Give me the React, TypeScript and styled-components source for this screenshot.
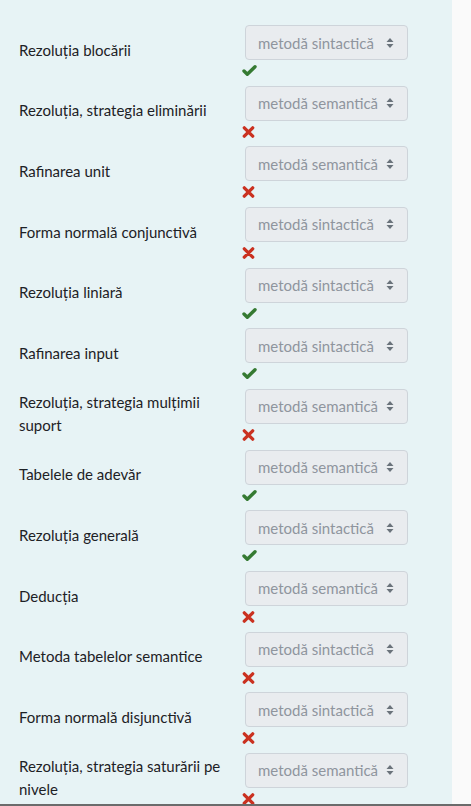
import React from "react";
import styled, { createGlobalStyle } from "styled-components";

const Global = createGlobalStyle`
  html, body { margin: 0; padding: 0; background: #fafafa; }
  body { font-family: "Segoe UI", "Lato", "Noto Sans", sans-serif; }
  * { box-sizing: border-box; }
`;

const Page = styled.div`
  width: 471px;
  height: 806px;
  display: flex;
  flex-direction: column;
  overflow: hidden;
  background: #fafafa;
  border-bottom: 2px solid #6b6b6b;
`;

const Panel = styled.div`
  width: 452px;
  flex: 1;
  background: #e7f3f5;
  padding: 25px 0 0 19px;
  display: flex;
  flex-direction: column;
  gap: 7.67px;
`;

const Row = styled.div`
  display: flex;
  align-items: center;
`;

const Label = styled.div`
  width: 226px;
  flex: none;
  font-size: 15px;
  line-height: 22.5px;
  color: #1d2125;
  padding-right: 6px;
  margin-top: -3px;
`;

const Control = styled.div`
  display: flex;
  flex-direction: column;
  align-items: flex-start;
`;

const Select = styled.div`
  width: 163px;
  height: 35px;
  border: 1px solid #ced4da;
  border-radius: 4px;
  background: #e9ecef;
  color: #8f959e;
  font-size: 15px;
  display: flex;
  align-items: center;
  justify-content: space-between;
  padding: 0 13px 0 12px;
`;

const Feedback = styled.div`
  height: 18px;
  margin-left: -3px;
  display: flex;
  align-items: center;
  padding-top: 4px;
`;

const Arrows = () => (
  <svg width="8" height="12" viewBox="0 0 8 12">
    <path d="M4 1 L7.5 5 H0.5 Z" fill="#6a737b" />
    <path d="M4 11 L7.5 7 H0.5 Z" fill="#6a737b" />
  </svg>
);

const Check = () => (
  <svg width="15" height="12" viewBox="0 0 15 12">
    <polyline points="2,6 5.3,9.3 13,1.8" fill="none" stroke="#357a32" strokeWidth="3.4" strokeLinecap="round" strokeLinejoin="round" />
  </svg>
);

const Cross = () => (
  <svg width="13" height="12" viewBox="0 0 13 12">
    <path d="M2.3 1.8 L10.7 10.2 M10.7 1.8 L2.3 10.2" fill="none" stroke="#ca3120" strokeWidth="3.3" strokeLinecap="round" />
  </svg>
);

const rows: { label: string; value: string; ok: boolean }[] = [
  { label: "Rezoluția blocării", value: "metodă sintactică", ok: true },
  { label: "Rezoluția, strategia eliminării", value: "metodă semantică", ok: false },
  { label: "Rafinarea unit", value: "metodă semantică", ok: false },
  { label: "Forma normală conjunctivă", value: "metodă sintactică", ok: false },
  { label: "Rezoluția liniară", value: "metodă sintactică", ok: true },
  { label: "Rafinarea input", value: "metodă sintactică", ok: true },
  { label: "Rezoluția, strategia mulțimii suport", value: "metodă semantică", ok: false },
  { label: "Tabelele de adevăr", value: "metodă semantică", ok: true },
  { label: "Rezoluția generală", value: "metodă sintactică", ok: true },
  { label: "Deducția", value: "metodă semantică", ok: false },
  { label: "Metoda tabelelor semantice", value: "metodă sintactică", ok: false },
  { label: "Forma normală disjunctivă", value: "metodă sintactică", ok: false },
  { label: "Rezoluția, strategia saturării pe nivele", value: "metodă semantică", ok: false },
];

export default function App() {
  return (
    <Page>
      <Global />
      <Panel>
        {rows.map((r, i) => (
          <Row key={i}>
            <Label>{r.label}</Label>
            <Control>
              <Select>
                <span>{r.value}</span>
                <Arrows />
              </Select>
              <Feedback>{r.ok ? <Check /> : <Cross />}</Feedback>
            </Control>
          </Row>
        ))}
      </Panel>
    </Page>
  );
}
